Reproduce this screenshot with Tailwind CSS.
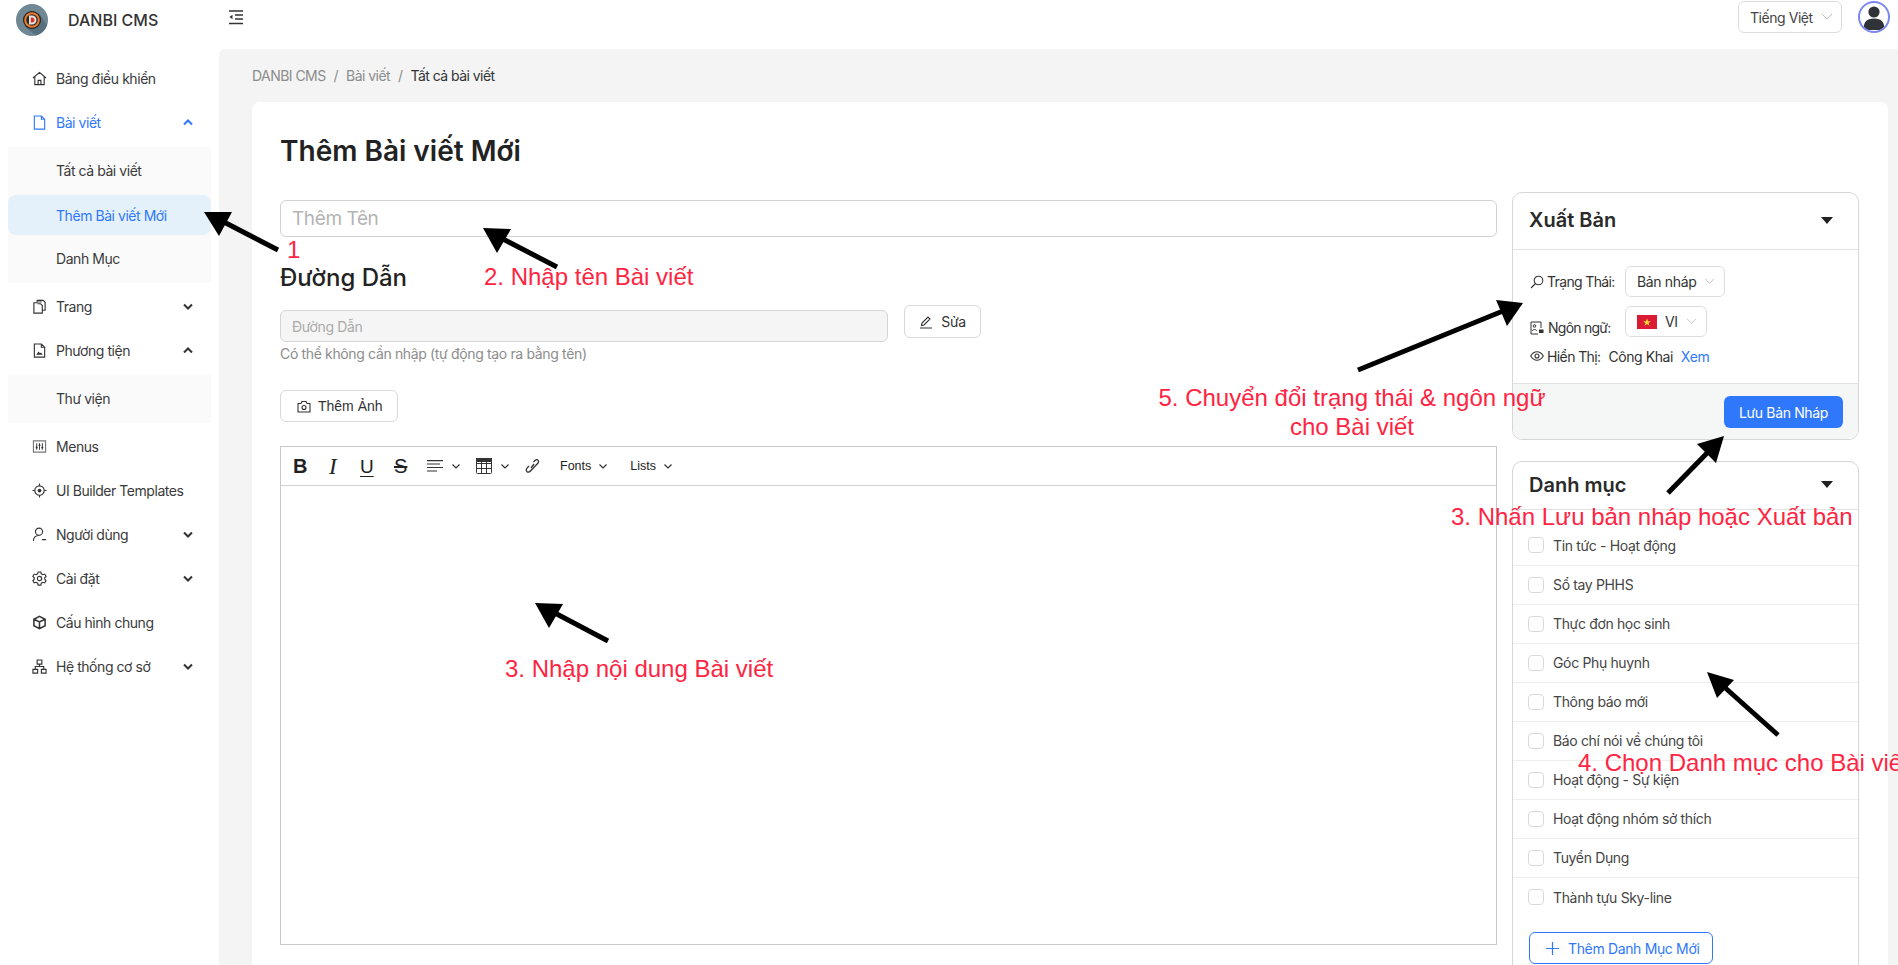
<!doctype html>
<html>
<head>
  <meta charset="UTF-8">
  <meta name="viewport" content="width=device-width, initial-scale=1.0">
  <script src="https://cdn.jsdelivr.net/npm/@tailwindcss/browser@4"></script>
</head>
<body class="font-['Inter',sans-serif] text-[#333] bg-white">
<div class="relative w-full h-[965px] overflow-hidden flex flex-col">

  <!-- top bar -->
  <header class="h-[49px] shrink-0 flex items-start bg-white">
    <div class="w-[228px] flex items-center pl-4 pt-1">
      <svg class="w-8 h-8" viewBox="0 0 32 32">
        <circle cx="16" cy="16" r="16" fill="#6f8894"/>
        <path d="M9 23 L23 9 L31 21 A16 16 0 0 1 20 31.500Z" fill="#577080"/>
        <circle cx="16" cy="16" r="9" fill="#222"/>
        <circle cx="16" cy="16" r="7.800" fill="#ee7b2c"/>
        <circle cx="16" cy="16" r="5.800" fill="#26282c"/>
        <path d="M13 11.500h3a4.500 4.500 0 0 1 0 9h-3z" fill="#e8e4dc"/>
        <path d="M14.800 13.500h1.200a2.500 2.500 0 0 1 0 5h-1.200z" fill="#d8352a"/>
      </svg>
      <span class="ml-5 text-[16px] font-medium text-[#333]">DANBI CMS</span>
    </div>
    <svg class="w-[16px] h-[15px] mt-[10px]" viewBox="0 0 16 15" fill="none" stroke="#333" stroke-width="1.300">
      <path d="M1 1h14M7 5h8M7 9h8M1 13.500h14"/><path d="M4.500 4.700v4.600L1.500 7z" fill="#333" stroke="none"/>
    </svg>
    <div class="ml-auto flex items-center pt-px pr-2 tracking-[-0.45px]">
      <div class="w-[104px] h-8 border border-[#ddd] rounded-md flex items-center pl-[11px] text-[14px] text-[#444]">
        Tiếng Việt
        <svg class="w-3 h-2 ml-2" viewBox="0 0 12 8" fill="none" stroke="#bbb"><path d="M1 1l5 5 5-5"/></svg>
      </div>
      <div class="ml-4 w-8 h-8 rounded-full border-2 border-[#7c86f2] overflow-hidden flex items-center justify-center">
        <svg class="w-7 h-7" viewBox="0 0 28 28" fill="#2f3338"><circle cx="14" cy="9" r="5.600"/><path d="M3.500 27c0-8 3-11.500 10.500-11.500S24.500 19 24.500 27z"/></svg>
      </div>
    </div>
  </header>

  <div class="flex flex-1 min-h-0">
    <!-- sidebar -->
    <aside class="w-[219px] shrink-0 pt-[7px] text-[14px] text-[#3a3a3a] tracking-[-0.45px]">
      <div class="h-11 flex items-center pl-8">
        <svg class="w-[15px] h-[15px] mr-[9px]" viewBox="0 0 16 16" fill="none" stroke="#333" stroke-width="1.200"><path d="M1 7.500 8 1.500l7 6M3 6v8.500h10V6M6.500 14.500V10h3v4.500"/></svg>
        Bảng điều khiển
      </div>
      <div class="h-11 flex items-center pl-8 text-[#2f78fb]">
        <svg class="w-[15px] h-[15px] mr-[9px]" viewBox="0 0 16 16" fill="none" stroke="#2f78fb" stroke-width="1.200"><path d="M2.500 1h7.500l3.500 3.500V15h-11zM10 1v3.500h3.500"/></svg>
        Bài viết
        <svg class="w-[10px] h-[7px] ml-auto mr-[26px]" viewBox="0 0 10 7" fill="none" stroke="#2f78fb" stroke-width="2"><path d="M1 5.500l4-4 4 4"/></svg>
      </div>
      <div class="mx-2 mt-[3px] mb-px pt-px pb-[3px] bg-[#fafafa]">
        <div class="h-11 flex items-center pl-12">Tất cả bài viết</div>
        <div class="h-10 mt-[3px] mb-px flex items-center pl-12 bg-[#e4f1fb] rounded-lg text-[#2f78fb]">Thêm Bài viết Mới</div>
        <div class="h-11 flex items-center pl-12">Danh Mục</div>
      </div>
      <div class="h-11 flex items-center pl-8">
        <svg class="w-[15px] h-[15px] mr-[9px]" viewBox="0 0 16 16" fill="none" stroke="#333" stroke-width="1.200"><path d="M2 4h3.500V1.500H12l2 2v8.500h-3V15H2zM6 5h3l2 2v5"/><path d="M7.500 1v3M9.500 1v3" stroke-width="1"/></svg>
        Trang
        <svg class="w-[10px] h-[7px] ml-auto mr-[26px]" viewBox="0 0 10 7" fill="none" stroke="#333" stroke-width="2"><path d="M1 1.500l4 4 4-4"/></svg>
      </div>
      <div class="h-11 flex items-center pl-8">
        <svg class="w-[15px] h-[15px] mr-[9px]" viewBox="0 0 16 16" fill="none" stroke="#333" stroke-width="1.200"><path d="M2.500 1h7.500l3.500 3.500V15h-11zM10 1v3.500h3.500"/><path d="M4.500 12.500 7 9l1.500 2 1-1 2 2.500z" fill="#333" stroke="none"/></svg>
        Phương tiện
        <svg class="w-[10px] h-[7px] ml-auto mr-[26px]" viewBox="0 0 10 7" fill="none" stroke="#333" stroke-width="2"><path d="M1 5.500l4-4 4 4"/></svg>
      </div>
      <div class="mx-2 mt-[3px] mb-px pt-px pb-[3px] bg-[#fafafa]">
        <div class="h-11 flex items-center pl-12">Thư viện</div>
      </div>
      <div class="h-11 flex items-center pl-8">
        <svg class="w-[15px] h-[15px] mr-[9px]" viewBox="0 0 16 16" fill="none" stroke="#333" stroke-width="1.200"><path d="M1.500 2h13v12h-13z" stroke="#777"/><path d="M5 4.500v7M8 4.500v7M11 4.500v7" stroke-width="1"/><path d="M4 9h2M7 6.500h2M10 9h2" stroke-width="1.500"/></svg>
        Menus
      </div>
      <div class="h-11 flex items-center pl-8">
        <svg class="w-[15px] h-[15px] mr-[9px]" viewBox="0 0 16 16" fill="none" stroke="#333" stroke-width="1.200"><circle cx="8" cy="8" r="5"/><circle cx="8" cy="8" r="2" fill="#333" stroke="none"/><path d="M8 .5V3M8 13v2.500M.5 8H3M13 8h2.500"/></svg>
        UI Builder Templates
      </div>
      <div class="h-11 flex items-center pl-8">
        <svg class="w-[15px] h-[15px] mr-[9px]" viewBox="0 0 16 16" fill="none" stroke="#333" stroke-width="1.200"><circle cx="7.500" cy="5" r="3.800"/><path d="M1.500 15c0-3.500 2-6 6-6M10.500 13.500h4.500"/></svg>
        Người dùng
        <svg class="w-[10px] h-[7px] ml-auto mr-[26px]" viewBox="0 0 10 7" fill="none" stroke="#333" stroke-width="2"><path d="M1 1.500l4 4 4-4"/></svg>
      </div>
      <div class="h-11 flex items-center pl-8">
        <svg class="w-[15px] h-[15px] mr-[9px]" viewBox="0 0 16 16" fill="none" stroke="#333" stroke-width="1.200"><circle cx="8" cy="8" r="2.300"/><path d="M6.500 1h3l.4 2 1.700 1 2-.7 1.400 2.500-1.500 1.400v1.600l1.500 1.400-1.400 2.500-2-.7-1.700 1-.4 2h-3l-.4-2-1.700-1-2 .7L.9 10.200l1.500-1.400V7.200L.9 5.800l1.400-2.500 2 .7 1.700-1z"/></svg>
        Cài đặt
        <svg class="w-[10px] h-[7px] ml-auto mr-[26px]" viewBox="0 0 10 7" fill="none" stroke="#333" stroke-width="2"><path d="M1 1.500l4 4 4-4"/></svg>
      </div>
      <div class="h-11 flex items-center pl-8">
        <svg class="w-[15px] h-[15px] mr-[9px]" viewBox="0 0 16 16" fill="none" stroke="#333" stroke-width="1.600"><path d="M8 1.500l6 3v7l-6 3-6-3v-7zM2 4.500l6 3 6-3M8 7.500v7"/></svg>
        Cấu hình chung
      </div>
      <div class="h-11 flex items-center pl-8">
        <svg class="w-[15px] h-[15px] mr-[9px]" viewBox="0 0 16 16" fill="none" stroke="#333" stroke-width="1.200"><path d="M5.500 1h5v4.500h-5zM1 11h5v4H1zM10 11h5v4h-5zM8 5.500V8M3.500 11V8h9v3"/></svg>
        Hệ thống cơ sở
        <svg class="w-[10px] h-[7px] ml-auto mr-[26px]" viewBox="0 0 10 7" fill="none" stroke="#333" stroke-width="2"><path d="M1 1.500l4 4 4-4"/></svg>
      </div>
    </aside>

    <!-- main -->
    <main class="flex-1 min-w-0 bg-[#f4f4f4] rounded-tl-md pl-[33px] pr-[10px] tracking-[-0.35px]">
      <div class="h-[53px] flex items-center text-[14px] text-[#8c8c8c] tracking-[-0.55px]">
        <span>DANBI CMS</span><span class="mx-2">/</span><span>Bài viết</span><span class="mx-2">/</span><span class="text-[#333]">Tất cả bài viết</span>
      </div>
      <section class="bg-white rounded-t-lg h-[900px] pl-7 pr-[29px]">
        <h1 class="pt-[31px] h-[98px] text-[28px] leading-[36px] font-semibold text-[#222] tracking-normal">Thêm Bài viết Mới</h1>
        <div class="flex gap-[15px]">
          <div class="w-[1217px] shrink-0">
            <div class="h-[37px] border border-[#d2d2d2] rounded-md flex items-center px-[11px] pt-px text-[19px] tracking-[-0.4px] text-[#b4b4b4]">Thêm Tên</div>
            <h2 class="mt-[24px] text-[24px] leading-[34px] font-medium text-[#222] tracking-normal">Đường Dẫn</h2>
            <div class="flex items-start mt-[10px]">
              <div class="w-[608px] h-[32px] mt-[5px] border border-[#d5d5d5] bg-[#f5f5f5] rounded-md flex items-center px-[11px] text-[14px] text-[#aaa]">Đường Dẫn</div>
              <div class="ml-4 w-[77px] h-[33px] border border-[#d9d9d9] rounded-md flex items-center justify-center text-[14px]">
                <svg class="w-[14px] h-[14px] mr-2" viewBox="0 0 14 14" fill="none" stroke="#333" stroke-width="1.100"><path d="M1 13h12M2.500 10.500l.5-2.500 6-6 2 2-6 6z"/></svg>Sửa
              </div>
            </div>
            <p class="mt-[2px] text-[14px] leading-[20px] text-[#8c8c8c]">Có thể không cần nhập (tự động tạo ra bằng tên)</p>
            <div class="mt-[26px] w-[118px] h-[32px] border border-[#d9d9d9] rounded-md flex items-center pl-4 font-['Liberation_Sans',sans-serif] text-[14px] tracking-normal">
              <svg class="w-[14px] h-[13px] mr-[7px]" viewBox="0 0 14 13" fill="none" stroke="#333" stroke-width="1.100"><path d="M1 3.500h3l1-2h4l1 2h3V12H1z"/><circle cx="7" cy="7.500" r="2"/></svg>Thêm Ảnh
            </div>
            <div class="mt-[24px] h-[499px] border border-[#c9c9c9]">
              <div class="h-[39px] border-b border-[#d0d0d0] flex items-center font-['Liberation_Sans',sans-serif] text-[#222] tracking-normal">
                <span class="ml-3 w-9 text-[20px] leading-none font-bold">B</span>
                <span class="w-[31px] text-[23px] leading-none italic font-['Liberation_Serif',serif]">I</span>
                <span class="w-[34px] text-[19px] leading-none underline underline-offset-[3px]">U</span>
                <span class="w-[33px] text-[20px] leading-none line-through">S</span>
                <svg class="w-4 h-3" viewBox="0 0 16 12" stroke="#333" stroke-width="1.100"><path d="M0 .6h16M0 4h13M0 7.500h16M0 11h10"/></svg>
                <svg class="w-2 h-[5px] ml-[9px]" viewBox="0 0 8 5" fill="none" stroke="#333" stroke-width="1.200"><path d="M.5.5 4 4 7.500.5"/></svg>
                <svg class="w-4 h-4 ml-4" viewBox="0 0 16 16" fill="none" stroke="#333"><rect x=".5" y=".5" width="15" height="15" rx="1"/><path d="M.5 5.500h15M.5 10.500h15M5.500 4v11.500M10.500 4v11.500"/><path d="M0 0h16v4H0z" fill="#333" stroke="none"/></svg>
                <svg class="w-2 h-[5px] ml-[9px]" viewBox="0 0 8 5" fill="none" stroke="#333" stroke-width="1.200"><path d="M.5.5 4 4 7.500.5"/></svg>
                <svg class="w-[15px] h-[16px] ml-4" viewBox="0 0 15 16" fill="none" stroke="#333" stroke-width="1.300"><path d="M8.500 4 10 2.500c1.200-1.200 2.500-1 3.200 0s.4 2-.6 3L6 12.500C4.500 14.100 3 14.500 2 13.700s-1-2.500.2-3.800L4 8M9 6 6 10"/></svg>
                <span class="ml-[20px] text-[12.500px]">Fonts</span>
                <svg class="w-2 h-[5px] ml-[8px]" viewBox="0 0 8 5" fill="none" stroke="#333" stroke-width="1.200"><path d="M.5.5 4 4 7.500.5"/></svg>
                <span class="ml-[23px] text-[12.500px]">Lists</span>
                <svg class="w-2 h-[5px] ml-[8px]" viewBox="0 0 8 5" fill="none" stroke="#333" stroke-width="1.200"><path d="M.5.5 4 4 7.500.5"/></svg>
              </div>
            </div>
          </div>

          <div class="w-[347px] shrink-0 -mt-[8px]">
            <div class="h-[248px] border border-[#d6d6d9] rounded-[10px] flex flex-col overflow-hidden">
              <div class="h-[57px] shrink-0 border-b border-[#e2e2e2] flex items-center justify-between pl-[16px] pr-[25px] pb-[2px]">
                <span class="text-[20px] font-semibold text-[#2a2a2a] tracking-normal">Xuất Bản</span>
                <span class="w-0 h-0 border-x-[6px] border-x-transparent border-t-[7px] border-t-[#222]"></span>
              </div>
              <div class="flex-1 pl-[17px] text-[14px]">
                <div class="flex items-center h-[31px] mt-[16px]">
                  <svg class="w-[14px] h-[14px] mr-[3px]" viewBox="0 0 14 14" fill="none" stroke="#333" stroke-width="1.100"><circle cx="8.500" cy="5.500" r="4.300"/><path d="M5.500 8.500 1 13"/></svg>
                  <span class="w-[69px] tracking-[-0.65px]">Trạng Thái:</span>
                  <div class="ml-[9px] w-[100px] h-[31px] border border-[#ddd] rounded-md flex items-center pl-[11px]">
                    Bản nháp
                    <svg class="w-[11px] h-[7px] ml-2" viewBox="0 0 12 8" fill="none" stroke="#bbb"><path d="M1 1l5 5 5-5"/></svg>
                  </div>
                </div>
                <div class="flex items-start h-[31px] mt-[9px]">
                  <div class="flex items-center mt-[11px]">
                    <svg class="w-[14px] h-[14px] mr-[4px]" viewBox="0 0 14 14" fill="none" stroke="#333" stroke-width="1"><path d="M8 13H1V1h10v6"/><circle cx="4.500" cy="5" r="1.300"/><path d="M2.500 10c0-2 4-2 4 0"/><rect x="9" y="8.500" width="4.500" height="3.500" fill="#333" stroke="none"/></svg>
                    <span class="w-[66px] tracking-[-0.75px]">Ngôn ngữ:</span>
                  </div>
                  <div class="ml-[11px] w-[82px] h-[31px] border border-[#ddd] rounded-md flex items-center pl-[11px]">
                    <svg class="w-5 h-[14px] mr-2" viewBox="0 0 20 14"><rect width="20" height="14" fill="#da1b33"/><path d="M10 3.500l1 2.700h2.900l-2.300 1.800.9 2.800-2.500-1.700-2.500 1.700.9-2.800-2.300-1.800H9z" fill="#fdd835"/></svg>
                    VI
                    <svg class="w-[11px] h-[7px] ml-2" viewBox="0 0 12 8" fill="none" stroke="#bbb"><path d="M1 1l5 5 5-5"/></svg>
                  </div>
                </div>
                <div class="flex items-center h-5 mt-[9px]">
                  <svg class="w-[14px] h-[14px] mr-[3px]" viewBox="0 0 14 14" fill="none" stroke="#333" stroke-width="1.100"><path d="M.7 7C2.500 4 4.500 2.800 7 2.800S11.500 4 13.300 7c-1.800 3-3.800 4.200-6.300 4.200S2.500 10 .7 7z"/><circle cx="7" cy="7" r="2"/></svg>
                  <span class="tracking-[-0.6px]">Hiển Thị:</span>
                  <span class="ml-2 tracking-[-0.45px]">Công Khai</span>
                  <span class="ml-2 text-[#2f78fb]">Xem</span>
                </div>
              </div>
              <div class="h-[56px] shrink-0 border-t border-[#e2e2e2] bg-[#f5f6f6] flex items-start justify-end pt-3 pr-[15px]">
                <div class="w-[119px] h-8 bg-[#2f78fb] rounded-md flex items-center justify-center text-[14px] text-white">Lưu Bản Nháp</div>
              </div>
            </div>

            <div class="mt-[21px] h-[600px] border border-[#d6d6d9] rounded-[10px] overflow-hidden">
              <div class="h-[48px] border-b border-[#e2e2e2] flex items-center justify-between pl-[16px] pr-[25px] pb-[2px]">
                <span class="text-[20px] font-semibold text-[#2a2a2a] tracking-normal">Danh mục</span>
                <span class="w-0 h-0 border-x-[6px] border-x-transparent border-t-[7px] border-t-[#222]"></span>
              </div>
              <div class="h-[56px] pt-[15px] border-b border-[#eee] flex items-center px-[15px] text-[14px] text-[#444]"><span class="w-4 h-4 border border-[#d9d9d9] rounded mr-[9px]"></span>Tin tức - Hoạt động</div>
              <div class="h-[39px] pb-px border-b border-[#eee] flex items-center px-[15px] text-[14px] text-[#444]"><span class="w-4 h-4 border border-[#d9d9d9] rounded mr-[9px]"></span>Sổ tay PHHS</div>
              <div class="h-[39px] pb-px border-b border-[#eee] flex items-center px-[15px] text-[14px] text-[#444]"><span class="w-4 h-4 border border-[#d9d9d9] rounded mr-[9px]"></span>Thực đơn học sinh</div>
              <div class="h-[39px] pb-px border-b border-[#eee] flex items-center px-[15px] text-[14px] text-[#444]"><span class="w-4 h-4 border border-[#d9d9d9] rounded mr-[9px]"></span>Góc Phụ huynh</div>
              <div class="h-[39px] pb-px border-b border-[#eee] flex items-center px-[15px] text-[14px] text-[#444]"><span class="w-4 h-4 border border-[#d9d9d9] rounded mr-[9px]"></span>Thông báo mới</div>
              <div class="h-[39px] pb-px border-b border-[#eee] flex items-center px-[15px] text-[14px] text-[#444]"><span class="w-4 h-4 border border-[#d9d9d9] rounded mr-[9px]"></span>Báo chí nói về chúng tôi</div>
              <div class="h-[39px] pb-px border-b border-[#eee] flex items-center px-[15px] text-[14px] text-[#444]"><span class="w-4 h-4 border border-[#d9d9d9] rounded mr-[9px]"></span>Hoạt động - Sự kiện</div>
              <div class="h-[39px] pb-px border-b border-[#eee] flex items-center px-[15px] text-[14px] text-[#444]"><span class="w-4 h-4 border border-[#d9d9d9] rounded mr-[9px]"></span>Hoạt động nhóm sở thích</div>
              <div class="h-[39px] pb-px border-b border-[#eee] flex items-center px-[15px] text-[14px] text-[#444]"><span class="w-4 h-4 border border-[#d9d9d9] rounded mr-[9px]"></span>Tuyển Dụng</div>
              <div class="h-[39px] pb-px flex items-center px-[15px] text-[14px] text-[#444]"><span class="w-4 h-4 border border-[#d9d9d9] rounded mr-[9px]"></span>Thành tựu Sky-line</div>
              <div class="ml-[16px] mt-[15px] w-[184px] h-[32px] border border-[#2f78fb] rounded-md flex items-center pl-4 text-[14px] text-[#2f78fb]">
                <svg class="w-[13px] h-[13px] mr-[9px]" viewBox="0 0 13 13" stroke="#2f78fb" stroke-width="1.200"><path d="M6.500 0v13M0 6.500h13"/></svg>Thêm Danh Mục Mới
              </div>
            </div>
          </div>
        </div>
      </section>
    </main>
  </div>

  <!-- annotations drawn over the screenshot -->
  <svg class="absolute inset-0 pointer-events-none" width="1898" height="965" viewBox="0 0 1898 965" fill="none" stroke="#000" stroke-width="5">
    <path d="M278 250 222 221"/><path d="M204 212 232 212 219 236z" fill="#000" stroke="none"/>
    <path d="M557 267 501 238"/><path d="M483 228 511 229 497 253z" fill="#000" stroke="none"/>
    <path d="M608 641 553 612"/><path d="M535 603 563 604 549 628z" fill="#000" stroke="none"/>
    <path d="M1358 370 1503 311"/><path d="M1523 303 1507 326 1496 300z" fill="#000" stroke="none"/>
    <path d="M1668 493 1710 450"/><path d="M1724 436 1716 463 1697 444z" fill="#000" stroke="none"/>
    <path d="M1778 735 1722 685"/><path d="M1707 672 1734 680 1717 698z" fill="#000" stroke="none"/>
  </svg>
  <div class="absolute left-[287px] top-[236px] font-['Liberation_Sans',sans-serif] text-[24px] leading-[28px] text-[#ff2442]">1</div>
  <div class="absolute left-[484px] top-[263px] font-['Liberation_Sans',sans-serif] text-[24px] leading-[28px] text-[#ff2442] whitespace-nowrap">2. Nhập tên Bài viết</div>
  <div class="absolute left-[505px] top-[655px] font-['Liberation_Sans',sans-serif] text-[24px] leading-[28px] text-[#ff2442] whitespace-nowrap">3. Nhập nội dung Bài viết</div>
  <div class="absolute left-[1157px] top-[383px] w-[390px] text-center font-['Liberation_Sans',sans-serif] text-[24px] leading-[29px] text-[#ff2442] whitespace-nowrap">5. Chuyển đổi trạng thái &amp; ngôn ngữ<br>cho Bài viết</div>
  <div class="absolute left-[1451px] top-[503px] font-['Liberation_Sans',sans-serif] text-[24px] leading-[28px] text-[#ff2442] whitespace-nowrap">3. Nhấn Lưu bản nháp hoặc Xuất bản</div>
  <div class="absolute left-[1578px] top-[749px] font-['Liberation_Sans',sans-serif] text-[24px] leading-[28px] text-[#ff2442] whitespace-nowrap">4. Chọn Danh mục cho Bài viết</div>
</div>
</body>
</html>
